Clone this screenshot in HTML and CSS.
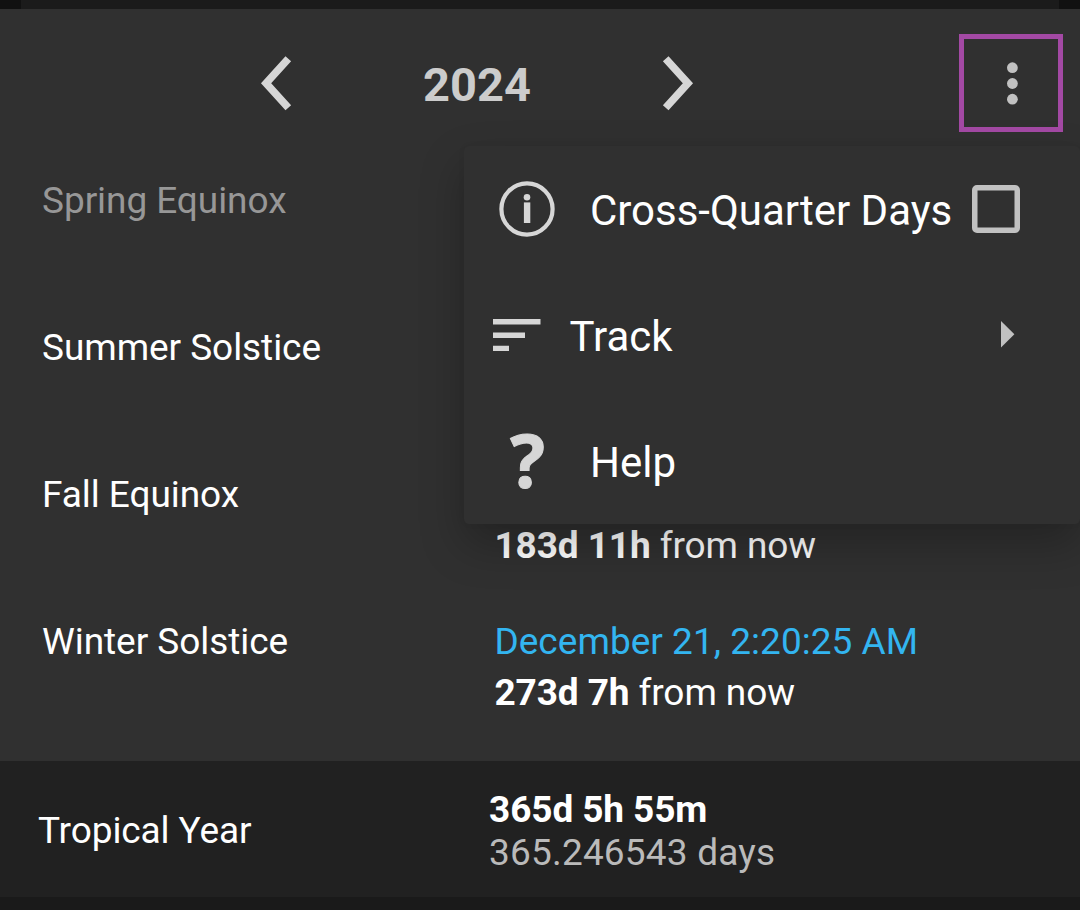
FILE: index.html
```
<!DOCTYPE html>
<html lang="en">
<head>
<meta charset="utf-8">
<title>Solstices and Equinoxes</title>
<link rel="stylesheet" href="styles.css">
</head>
<body>
<div class="app">
  <div class="top-strip"></div>
  <main class="card">
    <header class="header">
      <nav class="year-nav">
        <svg class="chevron" viewBox="0 0 32 56"><path d="M28.3 2.7 6.1 27.2 28.3 51.7" /></svg>
        <h1 class="year">2024</h1>
        <svg class="chevron" viewBox="0 0 32 56"><path d="M3.7 2.7 25.9 27.2 3.7 51.7" /></svg>
      </nav>
      <button class="overflow" aria-label="More options">
        <svg class="dots" viewBox="0 0 12 44"><circle cx="6.4" cy="6.7" r="5.4"/><circle cx="6.4" cy="22.5" r="5.4"/><circle cx="6.4" cy="38.2" r="5.4"/></svg>
      </button>
    </header>
    <section class="events">
      <div class="event past"><span class="label">Spring Equinox</span></div>
      <div class="event"><span class="label">Summer Solstice</span></div>
      <div class="event"><span class="label">Fall Equinox</span>
        <div class="value fall"><span class="remaining"><b>183d 11h</b> from now</span></div></div>
      <div class="event"><span class="label">Winter Solstice</span>
        <div class="value"><span class="date">December 21, 2:20:25 AM</span><span class="remaining"><b>273d 7h</b> from now</span></div></div>
    </section>
    <div class="menu">
      <div class="item">
        <svg class="info" viewBox="0 0 56 56"><circle class="ring" cx="28" cy="28" r="25.6"/><circle cx="28" cy="16.3" r="3.3"/><path d="M24.9 21.4h6.4v20.6h-6.4z"/></svg>
        <span class="text">Cross-Quarter Days</span>
        <svg class="checkbox" viewBox="0 0 48 48"><path fill-rule="evenodd" d="M5 0H43a5 5 0 0 1 5 5V43a5 5 0 0 1-5 5H5a5 5 0 0 1-5-5V5a5 5 0 0 1 5-5ZM5.5 5.5V42.5H42.5V5.5Z"/></svg>
      </div>
      <div class="item track">
        <svg class="sort" viewBox="0 0 48 32"><path d="M0 0h47.5v5.4H0zM0 13.5h32v5.4H0zM0 26.7h16V32H0z"/></svg>
        <span class="text">Track</span>
        <svg class="arrow" viewBox="0 0 14 27"><path d="M0 0 13.4 13.3 0 26.6z"/></svg>
      </div>
      <div class="item">
        <span class="question">?</span>
        <span class="text">Help</span>
      </div>
    </div>
  </main>
  <footer class="tropical">
    <span class="tropical-label">Tropical Year</span>
    <div class="length"><b>365d 5h 55m</b><span class="days">365.246543 days</span></div>
  </footer>
</div>
</body>
</html>
```

FILE: styles.css
```
* { box-sizing: border-box; }
body { margin: 0; background: #1a1a1a; color: #fff; font-family: Roboto, sans-serif; }
svg { display: block; flex: none; }
b { font-weight: 700; }
.app { width: 1080px; height: 910px; overflow: hidden; display: flex; flex-direction: column; }
.top-strip { height: 9px; background: #1b1b1b; border: solid #111; border-width: 0 21px; }
.card { position: relative; height: 752px; background: #303030; }
.header { height: 166px; display: flex; align-items: flex-start; }
.year-nav { width: 954px; height: 149px; display: flex; align-items: center; justify-content: center; }
.year { margin: 0; width: 370px; padding-top: 2px; text-align: center; font-size: 47px; line-height: 56px; font-weight: 700; color: #ccc; }
.chevron { width: 32px; height: 56px; fill: none; stroke: #d6d6d6; stroke-width: 7.6; }
.overflow { margin: 25px 0 0 5px; width: 104px; height: 98px; border: 5px solid #a349a4; background: none; padding: 0 0 0 2px; display: flex; align-items: center; justify-content: center; }
.dots { width: 12px; height: 44px; fill: #c1c1c1; overflow: visible; }
.events { display: flex; flex-direction: column; gap: 45px; font-size: 37px; line-height: 51px; }
.event { height: 102px; display: flex; padding-left: 42px; }
.past { color: #979797; }
.label { width: 452.4px; letter-spacing: -0.06px; }
.value { display: flex; flex-direction: column; }
.fall { justify-content: flex-end; }
.date { color: #33b5f0; letter-spacing: 0.03px; }
.remaining { letter-spacing: -0.09px; }
.menu { position: absolute; top: 137px; left: 464px; width: 616px; height: 378px; border-radius: 5px; background: #303030; box-shadow: 0 20px 44px rgba(0,0,0,.26), 0 0 8px rgba(0,0,0,.03); }
.item { height: 126px; display: flex; align-items: center; padding-left: 35px; font-size: 42px; line-height: 50px; }
.info { width: 56px; height: 56px; fill: #d6d6d6; }
.ring { fill: none; stroke: #d6d6d6; stroke-width: 4.2; }
.text { margin: 4px 0 0 35px; white-space: nowrap; letter-spacing: -0.02px; }
.checkbox { width: 48px; height: 48px; margin-left: 20px; fill: #c1c1c1; }
.track { padding-left: 29px; }
.sort { width: 48px; height: 32px; margin-top: -1px; fill: #d6d6d6; }
.track .text { margin-left: 28.5px; }
.arrow { width: 14px; height: 27px; margin: -1px 65px 0 auto; fill: #c1c1c1; }
.question { width: 56px; padding: 0 0 2px 1px; text-align: center; font-family: "Noto Sans", sans-serif; font-weight: 700; font-size: 73px; line-height: 100px; color: #d6d6d6; -webkit-text-stroke: 1px #d6d6d6; }
.tropical { height: 136px; background: #212121; display: flex; align-items: center; padding-left: 38px; font-size: 37px; line-height: 43px; }
.tropical-label { width: 451px; padding-top: 3px; letter-spacing: -0.1px; }
.length { display: flex; flex-direction: column; padding-top: 4px; }
.length b { letter-spacing: -0.1px; }
.days { color: #bababa; letter-spacing: 0.19px; }
```
